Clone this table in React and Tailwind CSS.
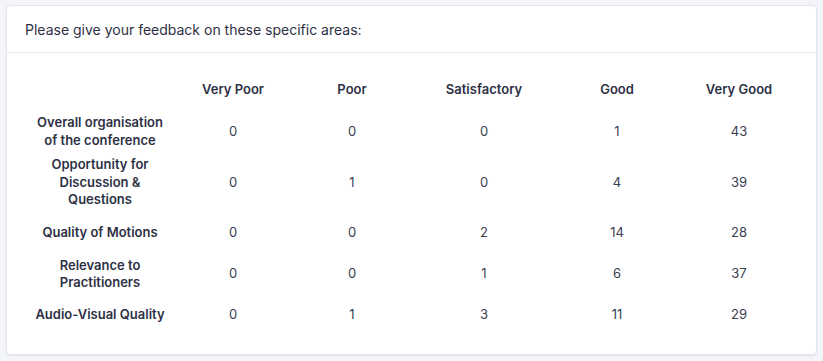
import React from 'react'

const columns = ['Very Poor', 'Poor', 'Satisfactory', 'Good', 'Very Good']

const rows = [
  { label: ['Overall organisation', 'of the conference'], values: [0, 0, 0, 1, 43], h: 'h-[47px]' },
  { label: ['Opportunity for', 'Discussion &', 'Questions'], values: [0, 1, 0, 4, 39], h: 'h-[55px]' },
  { label: ['Quality of Motions'], values: [0, 0, 2, 14, 28], h: 'h-[46px]' },
  { label: ['Relevance to', 'Practitioners'], values: [0, 0, 1, 6, 37], h: 'h-[36px]' },
  { label: ['Audio-Visual Quality'], values: [0, 1, 3, 11, 29], h: 'h-[46px]' },
]

const gridCols = 'grid grid-cols-[150px_116px_122px_142px_124px_120px] items-center'

export default function App() {
  return (
    <div className="min-h-[361px] bg-[#f3f5f9] px-[6px] pt-[5px] font-['Inter',sans-serif] text-[#2e3145]">
      <div className="w-[811px] h-[350px] rounded-[4px] border border-[#e2e5ee] bg-white shadow-[0_1px_2px_rgba(30,40,80,0.08)]">
        {/* Header */}
        <div className="h-[47px] border-b border-[#e6e8ef] pl-[18px] pt-[1px] flex items-center">
          <span className="text-[14px] leading-none">Please give your feedback on these specific areas:</span>
        </div>

        {/* Table */}
        <div className="pt-[19px] pl-[18px] text-[13px] leading-[17.5px]">
          <div className={`${gridCols} h-[36px] font-semibold text-center`}>
            <div />
            {columns.map(c => (
              <div key={c}>{c}</div>
            ))}
          </div>
          {rows.map((r, i) => (
            <div key={i} className={`${gridCols} ${r.h} text-center`}>
              <div className="font-semibold">
                {r.label.map(l => (
                  <div key={l}>{l}</div>
                ))}
              </div>
              {r.values.map((v, j) => (
                <div key={j} className="text-[#3a3d50]">{v}</div>
              ))}
            </div>
          ))}
        </div>
      </div>
    </div>
  )
}
